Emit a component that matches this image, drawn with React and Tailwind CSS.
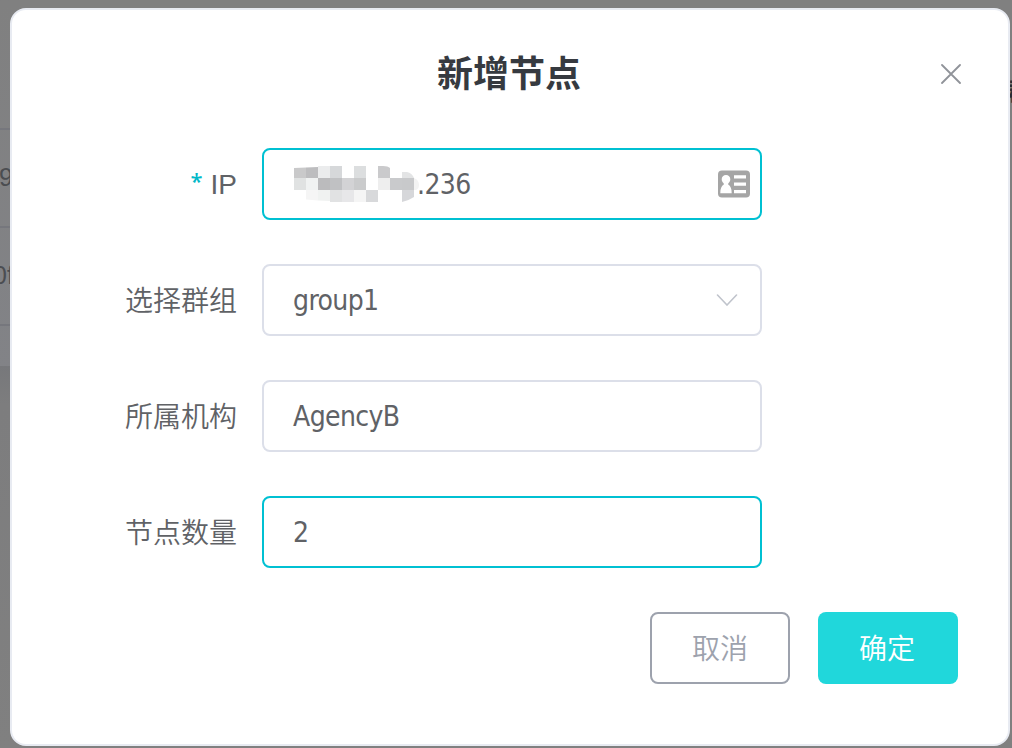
import React from "react";

const mosaic = [
  [0, 0, "#c9c9ca"], [1, 0, "#bdbdbf"], [2, 0, "#ebeced"], [3, 0, "#d6d8da"], [5, 0, "#dcdedf"],
  [0, 1, "#e0e2e2"], [1, 1, "#f0f2f2"], [2, 1, "#bbbbbd"], [3, 1, "#c0c1c3"], [4, 1, "#d3d3d5"],
  [5, 1, "#cacbcc"], [7, 1, "#eeeeee"], [8, 1, "#c9cacc"], [9, 1, "#c8c9cb"],
  [3, 2, "#e1e2e3"], [4, 2, "#e7e7e9"], [5, 2, "#f5f5f5"], [6, 2, "#d8d9db"],
];

function Mosaic() {
  return (
    <svg className="ml-px h-9 w-[125px] shrink-0" viewBox="0 0 125 36" aria-hidden="true">
      <g shapeRendering="crispEdges">
        {mosaic.map(([x, y, fill]) => (
          <rect key={`${x}-${y}`} x={x * 12} y={y * 12} width="12" height="12" fill={fill} />
        ))}
      </g>
      <path d="M0 0H24V1L0 2Z" fill="#fff" />
      <path d="M84 0h5q5 0 7 2v10H84z" fill="#cacacc" />
      <path d="M108 6h5q5 1 7 6h-12z" fill="#e3e4e5" />
      <path d="M120 12q5 2 5 7 0 4-3 5h-2z" fill="#f3f3f3" />
      <path d="M12 24h12v10.500l-12-1z" fill="#f5f5f5" />
      <path d="M24 24h12v11l-12-.5z" fill="#f0f2f1" />
      <path d="M108 24h12v7q-6 4-12 5z" fill="#d6d7da" />
    </svg>
  );
}

function ContactIcon() {
  return (
    <svg className="h-7 w-8 shrink-0" viewBox="0 0 32 28" aria-hidden="true">
      <rect y="0.500" width="32" height="27" rx="4" fill="#a5a5a5" />
      <path
        d="M8 5c-2.500 0-4.300 1.700-4.300 4.200 0 1.700.8 3.100 2 4v1.600C3.500 15.800 2.300 18.800 2.300 23.200h11.400c0-4.400-1.200-7.400-3.400-8.400v-1.600c1.200-.9 2-2.300 2-4C12.300 6.700 10.500 5 8 5Z"
        fill="#fff"
      />
      <path d="M16 5.200h12v3.200H16zM16 12.600h12v3.200H16zM16 20h12v3.200H16z" fill="#fff" />
    </svg>
  );
}

function Field({ label, required, active, children }) {
  return (
    <div className="flex h-[72px] items-center">
      <div className="flex w-[225px] justify-end pb-[2px] font-['Noto_Sans_CJK_SC',sans-serif] text-[28px] leading-[40px] font-[350] text-[#606266]">
        {required && <span className="-mt-[2px] mr-[8px] font-['Noto_Sans',sans-serif] text-[22px] font-medium text-[#00b8c8]">*</span>}
        <span className={required ? "pt-[3px] font-['Liberation_Sans',sans-serif] text-[28px]" : ""}>{label}</span>
      </div>
      <div
        className={`ml-[25px] flex h-[72px] w-[500px] items-center rounded-lg border-2 pl-[29px] font-['DejaVu_Sans_Condensed','DejaVu_Sans',sans-serif] text-[28px] font-stretch-condensed tracking-[-0.6px] text-[#606266] ${active ? "border-[#00c0d2]" : "border-[#dcdfe9]"}`}
      >
        {children}
      </div>
    </div>
  );
}

export default function App() {
  return (
    <div className="relative h-[748px] w-[1012px] overflow-hidden bg-[#808080]">
      <div className="absolute top-0 left-0 h-full w-3 overflow-hidden bg-linear-to-b from-[#808080] via-[#828387] to-[#7d7d7f] font-['Liberation_Sans',sans-serif] text-[25px] text-[#4b4d51]">
        <div className="h-[130px] border-b-2 border-[#76777d]" />
        <div className="flex h-[98px] items-center border-b-2 border-[#76777d]"><span className="-ml-[1px]">9</span></div>
        <div className="flex h-[98px] items-center border-b-2 border-[#76777d]"><span className="-ml-[7px]">0f</span></div>
        <div className="h-[40px]" />
        <div className="h-[382px] bg-linear-to-b from-[#77787b] via-[#7d7d7e] via-10% to-[#808080]" />
      </div>
      <div className="absolute top-[74px] right-0 w-[4px] overflow-hidden font-['Noto_Sans_CJK_SC',sans-serif] text-[24px] leading-[32px] font-bold text-[#292d35]">
        <span>群</span>
      </div>

      <div role="dialog" className="absolute top-2 left-[10px] flex h-[738px] w-[1000px] flex-col rounded-2xl border-2 border-[#e8ebf2] bg-white">
        <header className="relative flex h-[138px] justify-center pt-[35px]">
          <h1 className="-ml-[2px] font-['Noto_Sans_CJK_SC',sans-serif] text-[36px] leading-[52px] font-bold text-[#363a40]">新增节点</h1>
          <button aria-label="关闭" className="absolute top-[54px] right-[47px] h-5 w-5">
            <svg className="h-5 w-5" viewBox="0 0 20 20" fill="none" stroke="#909399" strokeWidth="1.800" strokeLinecap="round">
              <path d="m1 1 18 18M19 1 1 19" />
            </svg>
          </button>
        </header>
        <div className="flex flex-col gap-11">
          <Field label="IP" required active>
            <Mosaic />
            <span className="-ml-[2px] pt-[2px]">.236</span>
            <span className="mr-[10px] ml-auto"><ContactIcon /></span>
          </Field>
          <Field label="选择群组">
            <span className="pt-[2px]">group1</span>
            <svg className="mr-[22px] ml-auto h-3 w-[22px]" viewBox="0 0 22 12" fill="none" stroke="#c0c4cc" strokeWidth="1.600" strokeLinecap="round">
              <path d="m1.500 1 9.500 10 9.500-10" />
            </svg>
          </Field>
          <Field label="所属机构"><span className="pt-[2px]">AgencyB</span></Field>
          <Field label="节点数量" active><span className="pt-[2px]">2</span></Field>
        </div>
        <footer className="mt-11 flex justify-end gap-7 pr-[50px] font-['Noto_Sans_CJK_SC',sans-serif] text-[28px] leading-[40px] font-[350]">
          <button className="flex h-[72px] w-[140px] items-center justify-center rounded-lg border-2 border-[#9da2ad] pb-[2px] text-[#9da2ad]">取消</button>
          <button className="flex h-[72px] w-[140px] items-center justify-center rounded-lg bg-[#20d7db] pr-[2px] pb-[2px] text-white">确定</button>
        </footer>
      </div>
    </div>
  );
}
